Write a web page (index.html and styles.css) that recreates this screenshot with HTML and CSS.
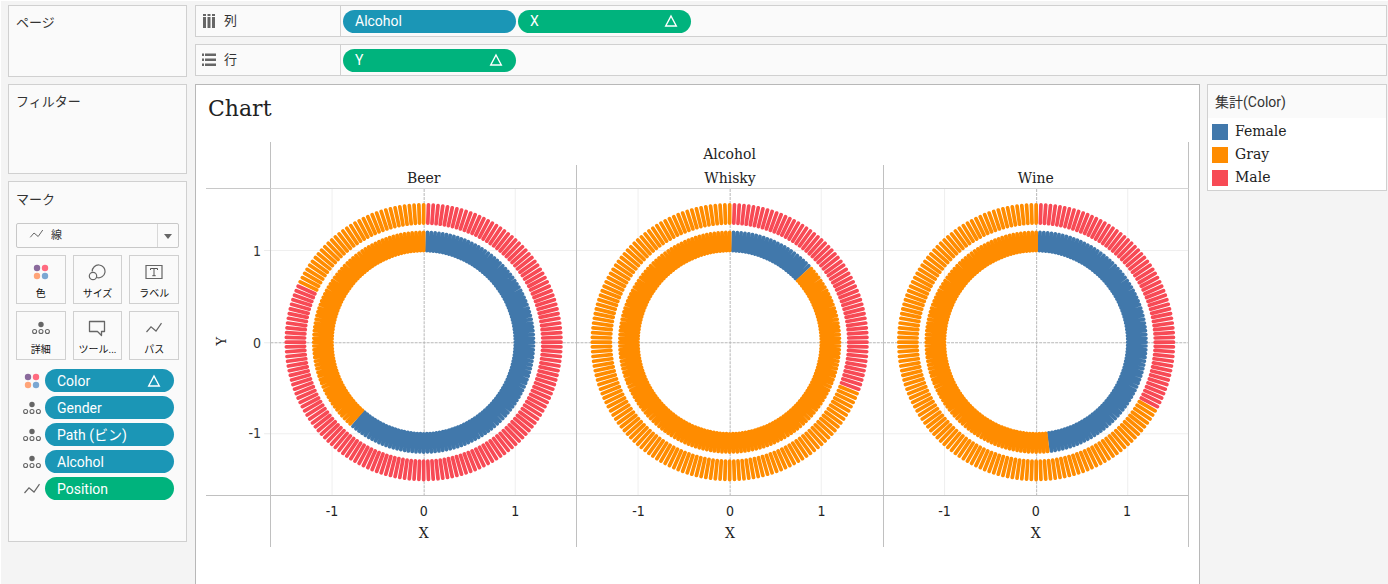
FILE: index.html
```
<!DOCTYPE html>
<html lang="ja">
<head>
<meta charset="utf-8">
<title>Chart</title>
<link rel="stylesheet" href="styles.css">
</head>
<body>
<svg class="defs" aria-hidden="true">
  <symbol id="i-color" viewBox="0 0 18 18"><circle cx="5" cy="5" r="3.2" fill="#8a6a9c"/><circle cx="13" cy="5" r="3.2" fill="#ff6b80"/><circle cx="5" cy="13" r="3.2" fill="#ffa478"/><circle cx="13" cy="13" r="3.2" fill="#7ba7d2"/></symbol>
  <symbol id="i-detail" viewBox="0 0 18 18"><circle cx="9" cy="5.500" r="2.700" fill="#666"/><g fill="none" stroke="#666" stroke-width="1.100"><circle cx="2.600" cy="12.500" r="2"/><circle cx="9" cy="12.500" r="2"/><circle cx="15.400" cy="12.500" r="2"/></g></symbol>
  <symbol id="i-path" viewBox="0 0 18 18"><path d="M1.500 13 6 7.800l5 4.200 5.500-7.800" fill="none" stroke="#666" stroke-width="1.200"/></symbol>
  <symbol id="i-size" viewBox="0 0 18 18"><g fill="none" stroke="#666" stroke-width="1.200"><path d="M4.200 8.500a6.400 6.400 0 1 1 4.600 6"/><circle cx="5" cy="13" r="3.700"/></g></symbol>
  <symbol id="i-tooltip" viewBox="0 0 18 18"><path d="M1.500 2.500h15v10h-3v4l-4-4h-8z" fill="none" stroke="#666" stroke-width="1.300" stroke-linejoin="round"/></symbol>
  <symbol id="i-label" viewBox="0 0 18 18"><path d="M1 2.500h16v13H1z" fill="none" stroke="#666" stroke-width="1.200"/><path d="M5.500 7V5.500h7V7M9 5.500v7.200M7.300 12.700h3.400" fill="none" stroke="#555" stroke-width="1"/></symbol>
  <symbol id="i-delta" viewBox="0 0 14 14"><path d="M7 2 12.300 12H1.700z" fill="none" stroke="#fff" stroke-width="1.400"/></symbol>
</svg>

<div class="app">
  <aside class="side">
    <section class="card card-pages"><h2>ページ</h2></section>
    <section class="card card-filters"><h2>フィルター</h2></section>
    <section class="card card-marks">
      <h2>マーク</h2>
      <div class="mark-type">
        <svg class="mark-icon"><use href="#i-path"/></svg>
        <select aria-label="マーク"><option>線</option></select>
        <span class="mark-arrow"></span>
      </div>
      <div class="mark-buttons">
        <button type="button"><svg><use href="#i-color"/></svg>色</button>
        <button type="button"><svg><use href="#i-size"/></svg>サイズ</button>
        <button type="button"><svg><use href="#i-label"/></svg>ラベル</button>
        <button type="button"><svg><use href="#i-detail"/></svg>詳細</button>
        <button type="button"><svg><use href="#i-tooltip"/></svg>ツール...</button>
        <button type="button"><svg><use href="#i-path"/></svg>パス</button>
      </div>
      <ul class="mark-fields">
        <li><svg><use href="#i-color"/></svg><button type="button" class="pill">Color<svg><use href="#i-delta"/></svg></button></li>
        <li><svg><use href="#i-detail"/></svg><button type="button" class="pill">Gender</button></li>
        <li><svg><use href="#i-detail"/></svg><button type="button" class="pill">Path (ビン)</button></li>
        <li><svg><use href="#i-detail"/></svg><button type="button" class="pill">Alcohol</button></li>
        <li><svg><use href="#i-path"/></svg><button type="button" class="pill green">Position</button></li>
      </ul>
    </section>
  </aside>

  <main class="main">
    <div class="shelves">
      <div class="shelf">
        <div class="shelf-name">
          <svg viewBox="0 0 14 14"><path d="M1 0h3v2H1zM5.500 0h3v2h-3zM10 0h3v2h-3zM1 3h3v11H1zM5.500 3h3v11h-3zM10 3h3v11h-3z" fill="#666"/></svg>列
        </div>
        <button type="button" class="pill">Alcohol</button>
        <button type="button" class="pill green">X<svg><use href="#i-delta"/></svg></button>
      </div>
      <div class="shelf">
        <div class="shelf-name">
          <svg viewBox="0 0 14 14"><path d="M0 .500h2v2.500H0zM3 .500h11v2.500H3zM0 5.500h2V8H0zM3 5.500h11V8H3zM0 10.500h2V13H0zM3 10.500h11V13H3z" fill="#666"/></svg>行
        </div>
        <button type="button" class="pill green">Y<svg><use href="#i-delta"/></svg></button>
      </div>
    </div>

    <div class="content">
      <section class="viz">
        <h1>Chart</h1>
        <div class="grid">
          <div class="corner"></div>
          <div class="group">Alcohol</div>
          <div class="name">Beer</div>
          <div class="name">Whisky</div>
          <div class="name">Wine</div>
          <svg class="yaxis" viewBox="0 0 64 306">
            <path d="M58 61.500h6M58 153.500h6M58 244.500h6" stroke="#ececec"/>
            <text class="num" x="55" y="67" text-anchor="end">1</text>
            <text class="num" x="55" y="159" text-anchor="end">0</text>
            <text class="num" x="55" y="249" text-anchor="end">-1</text>
            <text class="title" transform="translate(20 152) rotate(-90)" text-anchor="middle">Y</text>
          </svg>
          <svg class="pane" viewBox="-153 -153 306 306" preserveAspectRatio="xMidYMid slice" data-male="147" data-female="110"></svg>
          <svg class="pane" viewBox="-153 -153 306 306" preserveAspectRatio="xMidYMid slice" data-male="55" data-female="23"></svg>
          <svg class="pane" viewBox="-153 -153 306 306" preserveAspectRatio="xMidYMid slice" data-male="59" data-female="86"></svg>
          <div class="foot"></div>
          <div class="xaxis"><div class="ticks"><span>-1</span><span>0</span><span>1</span></div>X</div>
          <div class="xaxis"><div class="ticks"><span>-1</span><span>0</span><span>1</span></div>X</div>
          <div class="xaxis"><div class="ticks"><span>-1</span><span>0</span><span>1</span></div>X</div>
        </div>
      </section>
      <aside class="legend">
        <h2>集計(Color)</h2>
        <ul>
          <li><i class="female"></i>Female</li>
          <li><i class="gray"></i>Gray</li>
          <li><i class="male"></i>Male</li>
        </ul>
      </aside>
    </div>
  </main>
</div>
<script src="chart.js"></script>
</body>
</html>
```
FILE: styles.css
```
* { box-sizing: border-box; }
body {
  margin: 0;
  background: #f4f4f4;
  color: #333;
  font: 14px/20px Roboto, "Noto Sans CJK JP", sans-serif;
}
h1, h2, ul { margin: 0; padding: 0; font-weight: 400; }
ul { list-style: none; }
button, select { font: inherit; color: inherit; margin: 0; }
.defs { position: absolute; width: 0; height: 0; }

.app {
  display: flex;
  gap: 8px;
  min-height: 100vh;
  padding: 4px 1px 0 7px;
  border-top: 1px solid #fff;
  border-left: 1px solid #fff;
}
.side { flex: none; width: 179px; display: flex; flex-direction: column; gap: 7px; }
.card { border: 1px solid #d0d0d0; background: #fafafa; padding: 7px; }
.card h2 { font-size: 13px; line-height: 20px; }
.card-pages { min-height: 72px; }
.card-filters { min-height: 90px; }
.card-marks { min-height: 361px; padding-top: 8px; }

.mark-type { position: relative; margin-top: 13px; }
.mark-type select {
  display: block;
  width: 100%;
  height: 25px;
  padding: 0 0 0 34px;
  border: 1px solid #c8c8c8;
  border-radius: 2px;
  background: #fafafa;
  appearance: none;
  font-size: 11px;
}
.mark-icon { position: absolute; left: 13px; top: 3px; width: 15px; height: 16px; }
.mark-arrow {
  position: absolute;
  right: 1px;
  top: 1px;
  width: 21px;
  height: 23px;
  border-left: 1px solid #d8d8d8;
  pointer-events: none;
}
.mark-arrow::after {
  content: "";
  position: absolute;
  left: 6px;
  top: 10px;
  border: 4px solid transparent;
  border-top: 5px solid #666;
  border-bottom: 0;
}
.mark-buttons { display: grid; grid-template-columns: repeat(3, 1fr); gap: 7px; margin-top: 7px; }
.mark-buttons button {
  display: flex;
  flex-direction: column;
  align-items: center;
  height: 49px;
  padding: 7px 0 0;
  gap: 5px;
  border: 1px solid #d0d0d0;
  background: #fafafa;
  color: #111;
  font-size: 10px;
  line-height: 16px;
  white-space: nowrap;
}
.mark-buttons svg { width: 18px; height: 18px; flex: none; }
.mark-fields { display: grid; gap: 4px; margin-top: 9px; padding: 0 5px 0 7px; }
.mark-fields li { display: flex; align-items: center; gap: 4px; }
.mark-fields li > svg { width: 18px; height: 18px; flex: none; }
.mark-fields .pill { flex: 1; }

.pill {
  display: flex;
  align-items: center;
  justify-content: space-between;
  height: 23px;
  padding: 0 13px 0 12px;
  border: 0;
  border-radius: 12px;
  background: #1b96b6;
  color: #fff;
}
.pill.green { background: #00b37d; }
.pill svg { width: 14px; height: 14px; }

.main { flex: 1; min-width: 0; display: flex; flex-direction: column; gap: 8px; }
.shelves { display: grid; gap: 7px; }
.shelf {
  display: flex;
  align-items: center;
  gap: 2px;
  height: 32px;
  border: 1px solid #d0d0d0;
  background: #fafafa;
}
.shelf-name {
  display: flex;
  align-items: center;
  gap: 8px;
  align-self: stretch;
  width: 145px;
  padding-left: 6px;
  border-right: 1px solid #d0d0d0;
  font-size: 13px;
}
.shelf-name svg { width: 14px; height: 14px; }
.shelf .pill { width: 173px; }

.content { flex: 1; display: flex; align-items: flex-start; gap: 7px; }
.viz {
  flex: 1;
  align-self: stretch;
  padding: 8px 10px 0;
  border: 1px solid #b8b8b8;
  border-bottom: 0;
  background: #fff;
  color: #222;
  font-family: "DejaVu Serif", serif;
  font-size: 14px;
}
.viz h1 { font-size: 22px; line-height: 32px; padding-left: 2px; }
.grid {
  display: grid;
  grid-template-columns: 64fr 306fr 306fr 306fr;
  grid-template-rows: 23px 24px auto 51px;
  margin-top: 17px;
  text-align: center;
}
.corner { grid-row: 1 / 3; border-bottom: 1px solid #c8c8c8; }
.group { grid-column: 2 / 5; border: solid #c0c0c0; border-width: 0 1px; line-height: 25px; }
.name { border-left: 1px solid #c0c0c0; border-bottom: 1px solid #d4d4d4; line-height: 26px; }
.name:nth-child(5) { border-right: 1px solid #c0c0c0; }
.yaxis, .pane { display: block; width: 100%; height: 100%; border-bottom: 1px solid #c0c0c0; }
.pane { border-left: 1px solid #c0c0c0; }
.pane:nth-child(9) { border-right: 1px solid #c0c0c0; }
.num { font: 14px "DejaVu Sans Condensed", "DejaVu Sans", sans-serif; fill: #333; }
.title { font-size: 13px; fill: #222; }
.xaxis { border-left: 1px solid #c0c0c0; line-height: 22px; padding-top: 4px; }
.xaxis:last-child { border-right: 1px solid #c0c0c0; }
.ticks {
  display: grid;
  grid-template-columns: repeat(3, 91fr);
  width: 90%;
  margin: 0 auto;
  font-family: "DejaVu Sans Condensed", "DejaVu Sans", sans-serif;
}

.legend {
  flex: none;
  width: 180px;
  border: 1px solid #d0d0d0;
  background: #fff;
}
.legend h2 { height: 33px; padding-left: 7px; background: #fafafa; font-size: 14px; line-height: 34px; }
.legend ul { padding: 2px 4px 1px; font: 14px/23px "DejaVu Serif", serif; color: #222; }
.legend li { display: flex; align-items: center; gap: 7px; }
.legend i { width: 16px; height: 16px; }
.female { background: #4178ab; }
.gray { background: #ff8c00; }
.male { background: #f74a55; }
```
FILE: chart.js
```
// Two rings of spokes per pane: women inside, men outside, the rest in gray's colour.
const NS = "http://www.w3.org/2000/svg";
const UNIT = 91.5;
const STEPS = 180;

function add(svg, d, attrs) {
  const path = document.createElementNS(NS, "path");
  path.setAttribute("d", d);
  for (const key in attrs) path.setAttribute(key, attrs[key]);
  svg.appendChild(path);
}

function spokes(svg, from, to, inner, colour) {
  let d = "";
  for (let i = from; i < to; i++) {
    const a = (i / STEPS) * 2 * Math.PI;
    const x = Math.sin(a) * UNIT;
    const y = -Math.cos(a) * UNIT;
    const outer = inner + 0.2;
    d += `M${x * inner} ${y * inner}L${x * outer} ${y * outer}`;
  }
  add(svg, d, { stroke: colour, "stroke-width": 3.7, "stroke-linecap": "round" });
}

for (const svg of document.querySelectorAll(".pane")) {
  const male = Number(svg.dataset.male) + 1;
  const female = Number(svg.dataset.female) + 1;
  add(svg, "M-91.500-153v306M91.500-153v306M-153-91.500h306M-153 91.500h306", { stroke: "#efefef" });
  add(svg, "M.5-153v306M-153 .5h306", { stroke: "#b8b8b8", "stroke-dasharray": "3 1" });
  spokes(svg, 1, female, 1, "#4178ab");
  spokes(svg, female, STEPS + 1, 1, "#ff8c00");
  spokes(svg, male, STEPS + 1, 1.3, "#ff8c00");
  spokes(svg, 1, male, 1.3, "#f74a55");
}
```
